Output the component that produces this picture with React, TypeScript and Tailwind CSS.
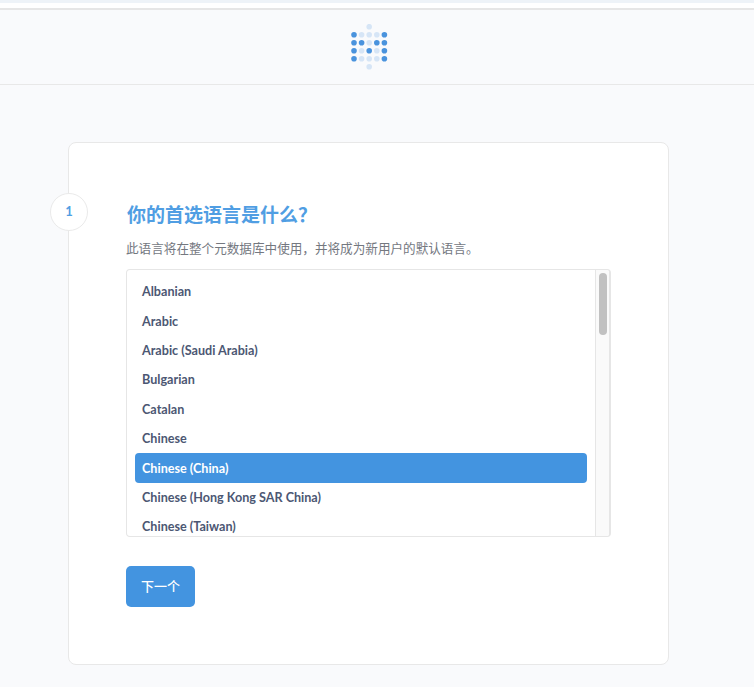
const sans = "font-['Lato','Noto_Sans_CJK_SC',sans-serif]";

const languages = [
  'Albanian',
  'Arabic',
  'Arabic (Saudi Arabia)',
  'Bulgarian',
  'Catalan',
  'Chinese',
  'Chinese (China)',
  'Chinese (Hong Kong SAR China)',
  'Chinese (Taiwan)',
];

// 0 = pale dot, 1 = strong dot, null = gap
const dots = [
  [null, null, 0, null, null],
  [1, 0, 0, 0, 1],
  [1, 1, 0, 1, 1],
  [1, 0, 1, 0, 1],
  [1, 0, 0, 0, 1],
  [null, null, 0, null, null],
];

function Logo() {
  return (
    <svg width="38" height="46" viewBox="0 0 38 46">
      {dots.map((row, y) =>
        row.map((d, x) =>
          d === null ? null : (
            <circle
              key={`${x}-${y}`}
              cx={3 + x * 7.6}
              cy={2.7 + y * 8}
              r="2.8"
              fill={d ? '#4a93dd' : '#d6e5f6'}
            />
          )
        )
      )}
    </svg>
  );
}

export default function App() {
  return (
    <div className={`${sans} w-[754px] h-[687px] overflow-hidden bg-[#f9fafc]`}>
      <div className="h-[3px] bg-[#eef3f8]" />
      <div className="h-[5px] bg-white" />
      <header className="h-[77px] border-t-2 border-b border-t-[#e6e6e6] border-b-[#e8e8e8] bg-[#f9fafc] flex items-center justify-center pr-[15px]">
        <Logo />
      </header>

      <div className="px-[68px] pt-[57px]">
        <section className="relative w-[601px] h-[523px] bg-white border border-[#e8e8e8] rounded-[8px] pl-[57px] pt-[60px]">
          <div className="absolute left-[-19px] top-[50px] w-[38px] h-[38px] rounded-full bg-white border border-[#eaeaea] flex items-center justify-center text-[13px] font-bold text-[#509ee3]">
            1
          </div>

          <h2 className="pl-[1px] text-[19px] leading-[24px] font-bold text-[#509ee3]">你的首选语言是什么？</h2>
          <p className="mt-[13px] text-[12.6px] leading-[18px] text-[#74787f]">
            此语言将在整个元数据库中使用，并将成为新用户的默认语言。
          </p>

          <div className="mt-[11px] w-[485px] h-[268px] border border-[#e6e6e6] border-r-2 rounded-[4px] flex overflow-hidden">
            <ul className="flex-1 min-w-0 overflow-hidden px-[8px] pt-[7px]">
              {languages.map((l) => (
                <li
                  key={l}
                  className={`h-[29.4px] px-[7px] pt-[2px] flex items-center rounded-[4px] text-[12.6px] font-bold whitespace-nowrap ${
                    l === 'Chinese (China)' ? 'bg-[#4394e0] text-white' : 'text-[#4c5773]'
                  }`}
                >
                  {l}
                </li>
              ))}
            </ul>
            <div className="w-[14px] shrink-0 border-l border-[#e6e6e6] bg-[#fafafa] pl-[3px] pr-[2px] pt-[3px]">
              <div className="h-[62px] rounded-full bg-[#c1c1c1]" />
            </div>
          </div>

          <button className="mt-[29px] w-[69px] h-[41px] rounded-[5px] bg-[#4394e0] text-white text-[13px] font-medium">
            下一个
          </button>
        </section>
      </div>
    </div>
  );
}
